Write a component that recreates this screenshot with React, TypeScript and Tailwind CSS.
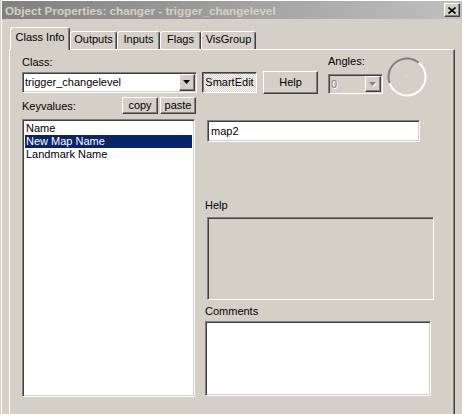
import React from 'react';

// Win2000-style bevels
const raised =
  'border border-t-white border-l-white border-r-[#404040] border-b-[#404040] shadow-[inset_-1px_-1px_0_#808080]';
const sunken =
  'border border-t-[#808080] border-l-[#808080] border-r-white border-b-white shadow-[inset_1px_1px_0_#404040,inset_-1px_-1px_0_#d4d0c8]';

const tabs = [
  { label: 'Class Info', cls: 'w-[60px] h-[23px] -mb-px relative z-10 pt-[3px]', active: true },
  { label: 'Outputs', cls: 'w-[47px] h-[18px] pt-[1px]', active: false },
  { label: 'Inputs', cls: 'w-[43px] h-[18px] pt-[1px]', active: false },
  { label: 'Flags', cls: 'w-[41px] h-[18px] pt-[1px]', active: false },
  { label: 'VisGroup', cls: 'w-[55px] h-[18px] pt-[1px]', active: false },
];

const keys = ['Name', 'New Map Name', 'Landmark Name'];

function DropArrow({ disabled }: { disabled?: boolean }) {
  return (
    <svg width="8" height="5" viewBox="0 0 8 5">
      {disabled && <polygon points="1,1 8,1 4.5,5" fill="#ffffff" />}
      <polygon points="0,0 7,0 3.5,4" fill={disabled ? '#808080' : '#000000'} />
    </svg>
  );
}

function Button({ children, className }: { children: React.ReactNode; className: string }) {
  return (
    <div className={`${raised} ${className} flex items-center justify-center bg-[#d4d0c8] text-black`}>
      {children}
    </div>
  );
}

function AngleDial() {
  return (
    <svg width="40" height="40" viewBox="0 0 40 40">
      <path d="M 2.6 26.2 A 18.5 18.5 0 0 1 31.9 5.8" fill="none" stroke="#808080" strokeWidth="2" />
      <path d="M 31.9 5.8 A 18.5 18.5 0 1 1 2.6 26.2" fill="none" stroke="#ffffff" strokeWidth="2" />
      <rect x="19" y="19" width="1" height="1" fill="#eeeeee" />
    </svg>
  );
}

export default function App() {
  return (
    <div className="w-[462px] h-[414px] overflow-hidden bg-[#d4d0c8] pl-[1px] font-['Liberation_Sans',Arial,sans-serif] text-[11px] leading-[13px] text-black">
      <div className="h-full flex flex-col border-l border-t border-white">
        {/* caption bar */}
        <div className="h-[18px] flex items-center justify-between bg-gradient-to-r from-[#808080] to-[#c0c0c0] pl-[3px] pr-[2px]">
          <span className="font-bold text-[11.7px] text-[#d4d0c8] whitespace-nowrap">
            Object Properties: changer - trigger_changelevel
          </span>
          <div className={`${raised} w-[16px] h-[14px] bg-[#d4d0c8] flex items-center justify-center`}>
            <svg width="8" height="7" viewBox="0 0 8 7">
              <path d="M0.5 0.5 L7.5 6.5 M7.5 0.5 L0.5 6.5" stroke="#000" strokeWidth="1.6" />
            </svg>
          </div>
        </div>

        {/* tab strip */}
        <div className="mt-[8px] pl-[8px] flex items-end">
          {tabs.map((t) => (
            <div
              key={t.label}
              className={`${t.cls} bg-[#d4d0c8] border-t border-l border-t-white border-l-white border-r border-r-[#404040] shadow-[inset_-1px_0_0_#808080] rounded-tl-[3px] rounded-tr-[3px] text-center whitespace-nowrap`}
            >
              {t.label}
            </div>
          ))}
        </div>

        {/* tab page */}
        <div className="ml-[7px] w-[446px] flex-1 flex border-t border-l border-t-white border-l-white border-r border-r-[#404040] shadow-[inset_-1px_0_0_#808080] pl-[12px]">
          {/* left column */}
          <div className="w-[175px] pt-[6px] flex flex-col">
            <div>Class:</div>
            <div className={`${sunken} mt-[3px] h-[21px] bg-white flex items-center pl-[2px] pr-[1px]`}>
              <span className="flex-1">trigger_changelevel</span>
              <div className={`${raised} w-[16px] h-[17px] bg-[#d4d0c8] flex items-center justify-center`}>
                <DropArrow />
              </div>
            </div>
            <div className="mt-[4px] h-[16px] flex items-end">
              <span className="flex-1">Keyvalues:</span>
              <Button className="w-[36px] h-[17px] mb-[-1px]">copy</Button>
              <Button className="w-[36px] h-[17px] mb-[-1px] ml-[2px] mr-[1px]">paste</Button>
            </div>
            <div className={`${sunken} mt-[6px] w-[173px] h-[278px] bg-white p-[2px]`}>
              {keys.map((k) => (
                <div
                  key={k}
                  className={`h-[13px] pl-[1px] ${k === 'New Map Name' ? 'bg-[#0a246a] text-white' : ''}`}
                >
                  {k}
                </div>
              ))}
            </div>
          </div>

          {/* right column */}
          <div className="ml-[5px] flex flex-col">
            <div className="flex items-start">
              <div className="mt-[22px] w-[55px] h-[21px] flex items-center justify-center border border-t-[#404040] border-l-[#404040] border-r-white border-b-white shadow-[inset_1px_1px_0_#808080] bg-[repeating-conic-gradient(#ffffff_0%_25%,#d4d0c8_0%_50%)] bg-[length:2px_2px]">
                SmartEdit
              </div>
              <Button className="mt-[21px] ml-[6px] w-[55px] h-[23px]">Help</Button>
              <div className="ml-[10px] mt-[5px] flex flex-col">
                <div>Angles:</div>
                <div className={`${sunken} mt-[6px] w-[55px] h-[20px] bg-[#d4d0c8] flex items-center pl-[2px] pr-[1px]`}>
                  <span className="flex-1 text-[#808080] [text-shadow:1px_1px_0_#ffffff]">0</span>
                  <div className={`${raised} w-[16px] h-[16px] bg-[#d4d0c8] flex items-center justify-center`}>
                    <DropArrow disabled />
                  </div>
                </div>
              </div>
              <div className="ml-[4px] mt-[7px]">
                <AngleDial />
              </div>
            </div>

            <div className={`${sunken} mt-[23px] ml-[5px] w-[213px] h-[22px] bg-white flex items-center pl-[3px]`}>
              map2
            </div>

            <div className="mt-[57px] ml-[3px]">Help</div>
            <div className={`${sunken} mt-[5px] ml-[5px] w-[227px] h-[83px] bg-[#d4d0c8]`} />

            <div className="mt-[5px] ml-[3px]">Comments</div>
            <div className={`${sunken} mt-[3px] ml-[3px] w-[226px] h-[75px] bg-white`} />
          </div>
        </div>
      </div>
    </div>
  );
}
